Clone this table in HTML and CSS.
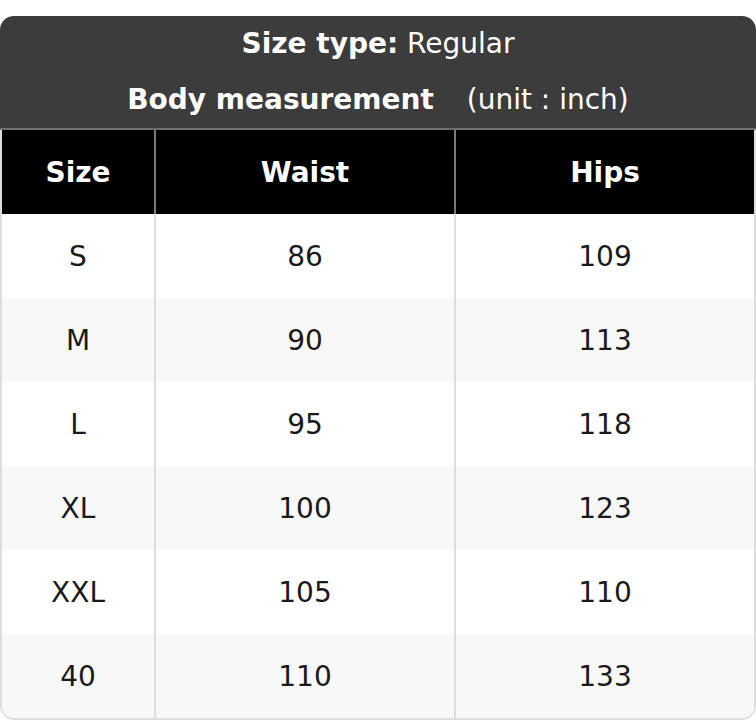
FILE: index.html
```html
<!DOCTYPE html>
<html>
<head>
<meta charset="utf-8">
<link rel="stylesheet" href="styles.css">
</head>
<body>
<div class="chart">
  <div class="head">
    <div class="line"><b>Size type:</b> Regular</div>
    <div class="line"><b>Body measurement</b><span class="unit">(unit : inch)</span></div>
  </div>
  <div class="body">
    <table class="sizes">
      <colgroup><col class="c1"><col class="c2"><col class="c3"></colgroup>
      <thead>
        <tr><th>Size</th><th>Waist</th><th>Hips</th></tr>
      </thead>
      <tbody>
        <tr><td>S</td><td>86</td><td>109</td></tr>
        <tr><td>M</td><td>90</td><td>113</td></tr>
        <tr><td>L</td><td>95</td><td>118</td></tr>
        <tr><td>XL</td><td>100</td><td>123</td></tr>
        <tr><td>XXL</td><td>105</td><td>110</td></tr>
        <tr><td>40</td><td>110</td><td>133</td></tr>
      </tbody>
    </table>
  </div>
</div>
</body>
</html>
```
FILE: styles.css
```css
html, body {
  margin: 0;
  padding: 0;
  background: #ffffff;
}
.chart {
  width: 756px;
  margin-top: 16px;
  border-radius: 14px;
  overflow: hidden;
  font-family: "DejaVu Sans", sans-serif;
  font-size: 28px;
}
.head {
  background: #3c3c3c;
  color: #ffffff;
  text-align: center;
  border-bottom: 2px solid #6f6f6f;
}
.line {
  height: 56px;
  line-height: 56px;
}
.unit {
  margin-left: 33px;
}
.body {
  border: 2px solid #dddddd;
  border-top: none;
  border-radius: 0 0 14px 14px;
  overflow: hidden;
}
.sizes {
  width: 100%;
  border-collapse: separate;
  border-spacing: 0;
  table-layout: fixed;
}
.c1 { width: 154px; }
.c2 { width: 300px; }
.c3 { width: auto; }
.sizes th {
  background: #000000;
  color: #ffffff;
  font-weight: bold;
  height: 84px;
  padding: 0;
  border-right: 2px solid #7a7a7a;
  text-align: center;
  vertical-align: middle;
}
.sizes td {
  height: 84px;
  padding: 0;
  color: #1a1a1a;
  text-align: center;
  vertical-align: middle;
  border-right: 2px solid #dddddd;
}
.sizes th:last-child,
.sizes td:last-child {
  border-right: none;
}
.sizes tbody tr:nth-child(even) td {
  background: #f8f8f8;
}
```
